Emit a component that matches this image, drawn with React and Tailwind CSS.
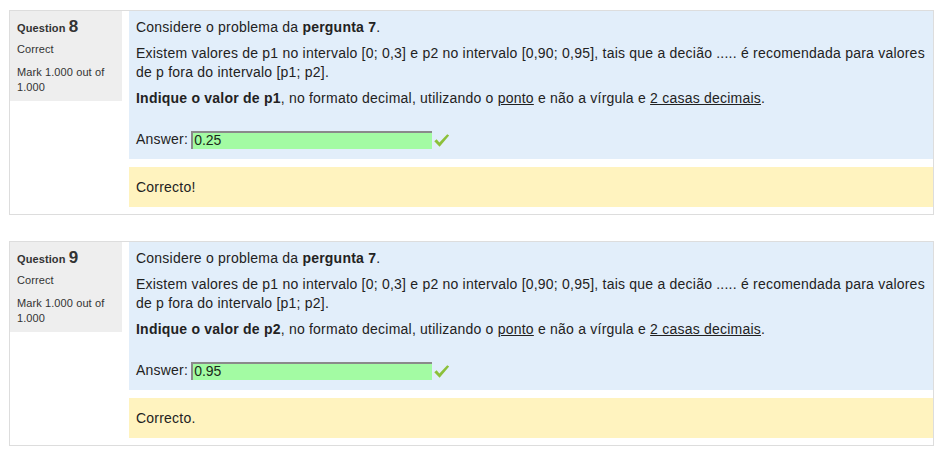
import React from "react";

function Check() {
  return (
    <svg width="17" height="15" viewBox="0 0 16 14" className="ml-[1px] mt-[2px]">
      <path d="M1.2 7.6 L3.4 5.8 L6 8.8 L13.4 1.2 L15.2 2.4 L6.2 12.8 Z" fill="#8cc03a" />
    </svg>
  );
}

function Question({ num, p, value, feedback }) {
  return (
    <div className="w-[925px] border border-[#dddddd] flex items-start">
      <div className="w-[112px] h-[90px] bg-[#eeeeee] px-[7px] pt-[8px] text-[11px] leading-[15px] text-[#333] tracking-[0.1px]">
        <div className="font-bold">
          Question <span className="text-[17px]">{num}</span>
        </div>
        <div className="mt-[6px]">Correct</div>
        <div className="mt-[8px]">Mark 1.000 out of 1.000</div>
      </div>
      <div className="flex-1 ml-[7px] pb-[7px]">
        <div className="bg-[#e2eefa] h-[148px] px-[7px] pt-[7px] text-[14px] leading-[19px] text-[#222] tracking-[0.22px]">
          <p>
            Considere o problema da <b>pergunta 7</b>.
          </p>
          <p className="mt-[7px]">
            Existem valores de p1 no intervalo [0; 0,3] e p2 no intervalo [0,90; 0,95], tais que a decião ..... é recomendada para valores de p fora do intervalo [p1; p2].
          </p>
          <p className="mt-[7px]">
            <b>Indique o valor de {p}</b>, no formato decimal, utilizando o <u>ponto</u> e não a vírgula e <u>2 casas decimais</u>.
          </p>
          <div className="mt-[22px] flex items-center">
            <span>Answer:</span>
            <div className="ml-[3px] w-[241px] h-[18px] bg-[#a3fba3] border-t-2 border-l-2 border-[#8a8a8a] leading-[15px] pl-[1px] text-[#1a2a1a] tracking-normal">
              {value}
            </div>
            <Check />
          </div>
        </div>
        <div className="mt-[8px] h-[40px] bg-[#fff3bf] px-[7px] flex items-center text-[14px] text-[#222] tracking-[0.22px]">
          {feedback}
        </div>
      </div>
    </div>
  );
}

export default function App() {
  return (
    <div
      className="w-[948px] h-[453px] bg-white pt-[10px] pl-[9px]"
      style={{ fontFamily: '"Liberation Sans", Arial, sans-serif' }}
    >
      <Question num="8" p="p1" value="0.25" feedback="Correcto!" />
      <div className="h-[26px]" />
      <Question num="9" p="p2" value="0.95" feedback="Correcto." />
    </div>
  );
}
